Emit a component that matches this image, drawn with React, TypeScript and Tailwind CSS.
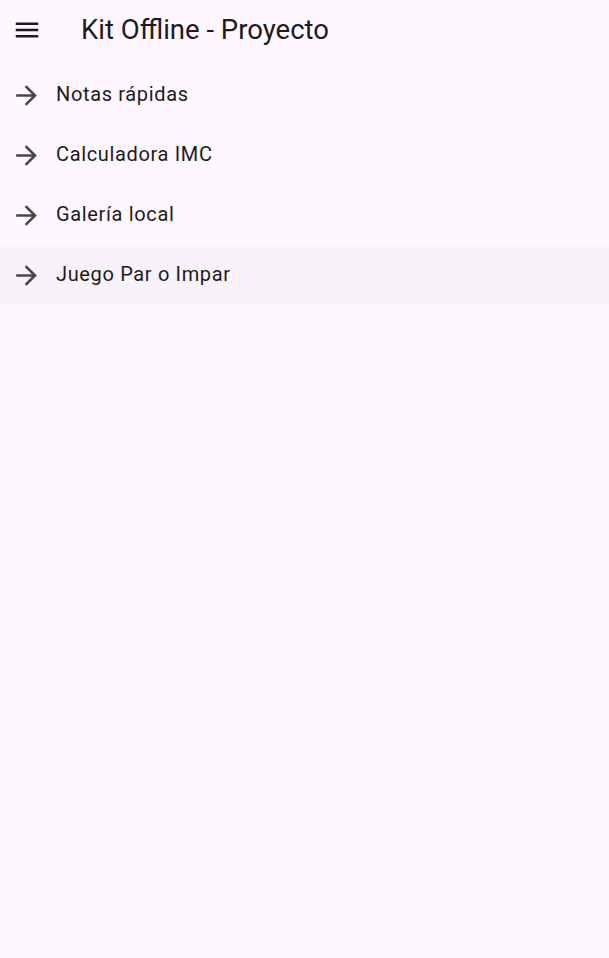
import React from 'react';

const items = ['Notas rápidas', 'Calculadora IMC', 'Galería local', 'Juego Par o Impar'];

function MenuIcon() {
  return (
    <svg width="30" height="30" viewBox="0 0 24 24" className="fill-[#1D1B20]">
      <path d="M3 18h18v-2H3v2zm0-5h18v-2H3v2zm0-7v2h18V6H3z" />
    </svg>
  );
}

function ArrowIcon() {
  return (
    <svg width="31" height="31" viewBox="0 0 24 24" className="fill-[#49454F]">
      <path d="M12 4l-1.41 1.41L16.17 11H4v2h12.17l-5.58 5.59L12 20l8-8z" />
    </svg>
  );
}

export default function App() {
  return (
    <div
      className="min-h-[958px] w-full bg-[#FEF7FF] text-[#1D1B20]"
      style={{ fontFamily: 'Roboto, "Noto Sans", sans-serif' }}
    >
      <header className="flex h-[60px] items-center">
        <div className="flex w-[52px] justify-center pl-[1px]">
          <MenuIcon />
        </div>
        <h1 className="ml-[29px] text-[27.5px] font-normal leading-none">Kit Offline - Proyecto</h1>
      </header>
      <ul className="mt-[5px]">
        {items.map((label, i) => (
          <li
            key={label}
            className={
              'flex h-[60px] items-center ' + (i === 3 ? 'bg-[#F8F2FA]' : '')
            }
          >
            <div className="flex w-[52px] justify-center">
              <ArrowIcon />
            </div>
            <span className="mb-[2px] ml-[4px] text-[20px] leading-none tracking-[0.65px]">{label}</span>
          </li>
        ))}
      </ul>
    </div>
  );
}
